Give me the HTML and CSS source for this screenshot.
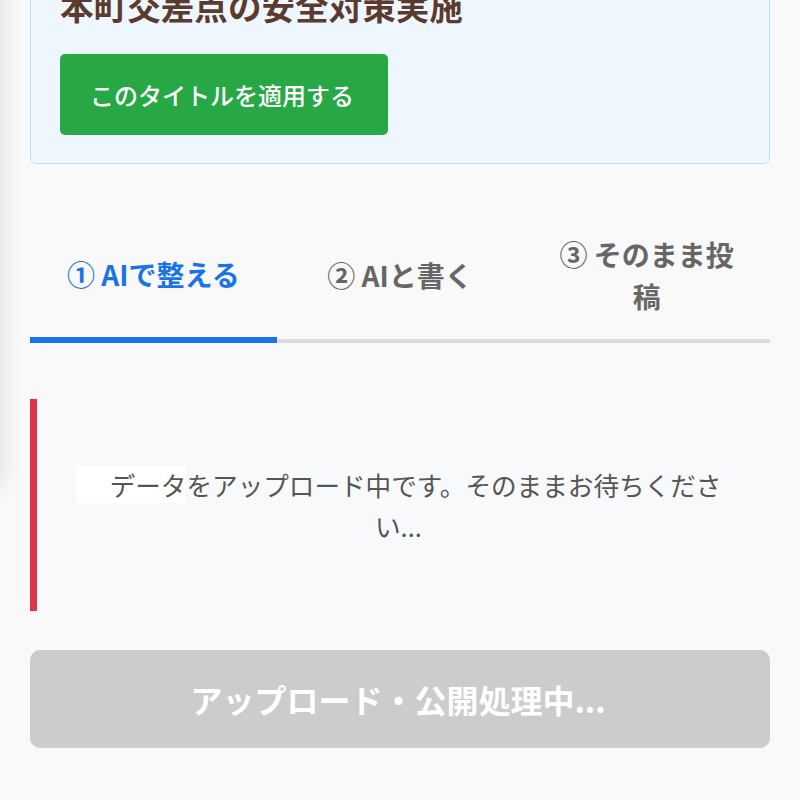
FILE: index.html
```html
<!DOCTYPE html>
<html lang="ja">
<head>
    <meta charset="UTF-8">
    <meta name="viewport" content="width=device-width, initial-scale=1.0">
    <title>投稿 - アップロード中</title>
    <link rel="stylesheet" href="styles.css">
</head>
<body>
    <div class="drawer-shadow"></div>

    <main class="page">
        <section class="title-card">
            <h2 class="title-text">本町交差点の安全対策実施</h2>
            <a href="#" class="btn-apply">このタイトルを適用する</a>
        </section>

        <nav class="tabs">
            <div class="tab active">① AIで整える</div>
            <div class="tab">② AIと書く</div>
            <div class="tab">③ そのまま投稿</div>
        </nav>

        <div class="status-box">
            <p class="status-text"><span class="status-lead"><span class="spinner"></span>データ</span>をアップロード中です。そのままお待ちください...</p>
        </div>

        <button class="btn-submit" disabled>アップロード・公開処理中...</button>
    </main>
</body>
</html>
```

FILE: styles.css
```css
* {
    margin: 0;
    padding: 0;
    box-sizing: border-box;
    font-family: "Noto Sans CJK JP", "Noto Sans", sans-serif;
}
body {
    background-color: #f9f9f9;
    color: #555;
    overflow: hidden;
}
.drawer-shadow {
    position: fixed;
    left: -300px;
    top: -20px;
    width: 300px;
    height: 505px;
    background-color: #fff;
    box-shadow: 0 0 22px rgba(0,0,0,0.13);
}
.page {
    padding: 0 30px;
}
.title-card {
    margin-top: -48px;
    background-color: #eff7fe;
    border: 1px solid #bde3f1;
    border-radius: 6px;
    padding: 29px 29px 28px;
}
.title-text {
    color: #5a3b2e;
    font-size: 33.6px;
    line-height: 47px;
    font-weight: bold;
    margin-bottom: 25px;
}
.btn-apply {
    display: inline-block;
    background-color: #28a745;
    color: white;
    text-decoration: none;
    font-size: 24px;
    font-weight: 500;
    line-height: 37px;
    padding: 22px 34px 22px 30px;
    border-radius: 5px;
}
.tabs {
    display: flex;
    margin-top: 49px;
}
.tab {
    flex: 1;
    display: flex;
    align-items: center;
    justify-content: center;
    text-align: center;
    padding: 20px 24px 22px;
    font-size: 28px;
    line-height: 42px;
    font-weight: bold;
    color: #666;
    border-bottom: 4px solid #ddd;
}
.tab.active {
    color: #1a73e8;
    border-bottom: 6px solid #1a73e8;
}
.status-box {
    margin-top: 56px;
    background-color: #f8f9fa;
    border-left: 7px solid #dc3545;
    padding: 65px 45px 65px 35px;
}
.status-text {
    font-size: 25.6px;
    line-height: 41px;
    text-align: center;
    color: #555;
}
.status-lead {
    background-color: #fff;
}
.spinner {
    display: inline-block;
    width: 34px;
}
.btn-submit {
    display: block;
    width: 100%;
    margin-top: 39px;
    background-color: #ccc;
    color: white;
    border: none;
    border-radius: 10px;
    font-size: 32px;
    font-weight: bold;
    line-height: 48px;
    padding: 25px 24px 25px 20px;
}
```
